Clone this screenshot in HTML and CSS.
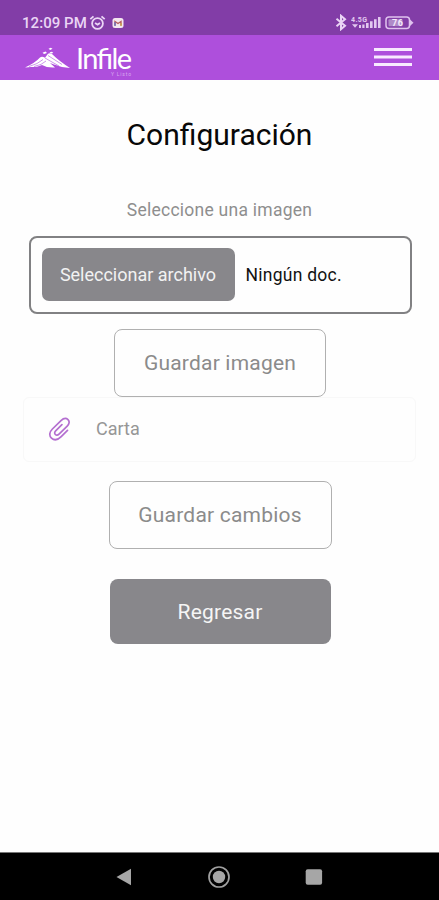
FILE: index.html
```html
<!DOCTYPE html>
<html lang="es">
<head>
<meta charset="utf-8">
<title>Configuración</title>
<link rel="stylesheet" href="styles.css">
</head>
<body>
<div class="status">
  <span class="clock">12:09 PM</span>
  <svg class="alarm" width="17" height="16" viewBox="0 0 17 16" fill="none" stroke="#ead5f5" stroke-width="1.8"><circle cx="8.5" cy="8.5" r="5.4"/><path d="M1.3 4.2 4.5 1.3M12.5 1.3l3.2 2.9M6 8l2.6 1.6L11 8"/></svg>
  <svg class="mail" width="12" height="12" viewBox="0 0 12 12"><rect x=".5" y="1" width="11" height="10" rx="2.5" fill="#f3e6ef"/><path d="M3 8.500V4.500l3 2 3-2v4" fill="none" stroke="#b8605e" stroke-width="1.4"/><path d="M3 5v4" stroke="#6a6fbd" stroke-width="1.4"/><path d="M9 6v3" stroke="#c9a24c" stroke-width="1.4"/></svg>
  <div class="signals">
    <svg width="12" height="17" viewBox="0 0 12 17" fill="none" stroke="#ead5f5" stroke-width="2"><path d="M1.5 4.800 10 11.800 6 15.200V1.800L10 5.200 1.500 12.200"/></svg>
    <svg class="bars" width="30" height="16" viewBox="0 0 30 16" fill="#e3c9f0"><text class="net" x="0" y="6.5" textLength="16">4.5G</text><path d="M1 9.200h6L4 12.700zM8 10h2v3H8zM11.300 9.500h2.200V13h-2.200zM15 8h2.600v5H15zM19 6.300h2.600V13H19zM23 4.300h2.600V13H23zM27 2h2.600v11H27z"/></svg>
    <svg width="29" height="14" viewBox="0 0 29 14"><rect x="1" y="1" width="23.500" height="11.500" rx="3" fill="none" stroke="#dfc2ee" stroke-width="1.500"/><path d="M25 3.500 28.500 6.800 25 10z" fill="#dfc2ee"/><rect x="3.500" y="3.300" width="14" height="7" rx="1" fill="#b08ac8"/><text class="level" x="7" y="10.200" textLength="11">76</text></svg>
  </div>
</div>
<header class="bar">
  <svg class="logo" width="112" height="36" viewBox="0 0 112 36" fill="#fff">
    <path d="M0 24.500Q10 20 15 14.500q2-1.500 5 .3l3-4q2-1.300 4 .2 7 7 18 14-9-.5-16-3.500l-4-1.500 5 4.500q-8 .5-13-2.500l-5 1.800-3 .3q-4-.5-9 .4z"/>
    <path d="m17.500 9.800 3-1.200 1.500 1.400-3 1zM23.500 5.800l2.300-1.100 1.700 1.100-2.300 1.200zM24.500 9.300l2.500-.6 1.300 1.200-2.300.5z"/>
    <path d="M4 23.500q9-2.500 14-7M9 23.500q8-1.500 12-5.500M20 15l14 8M23 12.500l14 9" fill="none" stroke="#b867e2" stroke-width=".7"/>
    <text class="brand" x="51" y="25.500" textLength="56" lengthAdjust="spacing">Infile</text>
    <text class="tag" x="86" y="33" textLength="20">Y Listo</text>
  </svg>
  <svg class="menu" width="38" height="21" viewBox="0 0 38 21"><path d="M0 2.500h38M0 10h38M0 17.500h38" stroke="#f8eaff" stroke-width="3"/></svg>
</header>
<main>
  <h1>Configuración</h1>
  <p class="hint">Seleccione una imagen</p>
  <div class="file"><button class="choose">Seleccionar archivo</button><span class="none">Ningún doc.</span></div>
  <button class="outline save-image">Guardar imagen</button>
  <div class="item">
    <svg width="26" height="26" viewBox="0 0 26 26" fill="none" stroke="#b46fd0" stroke-width="1.700" stroke-linecap="round"><path d="m21.500 14.300-6.300 6.300c-3.200 3.200-7 4-9.700 1.500s-2-6.200.9-9.100l8.600-8.400c2.400-2.300 5.200-2.700 7-1s1.400 4.300-.8 6.500l-7.900 7.800c-1.400 1.400-3 1.600-4 .6s-.8-2.500.6-3.900l6-5.900"/></svg>
    <span>Carta</span>
  </div>
  <button class="outline save-changes">Guardar cambios</button>
  <button class="back">Regresar</button>
</main>
<nav>
  <svg width="16" height="18" viewBox="0 0 16 18"><path d="M15 .8v16.400L.5 9z" fill="#a6a6a6"/></svg>
  <svg width="24" height="24" viewBox="0 0 24 24"><circle cx="12" cy="12" r="10" fill="none" stroke="#a0a0a0" stroke-width="1.700"/><circle cx="12" cy="12" r="6.200" fill="#a6a6a6"/></svg>
  <svg width="18" height="18" viewBox="0 0 18 18"><rect x=".7" y="1.200" width="16.400" height="15.600" rx="2" fill="#a6a6a6"/></svg>
</nav>
</body>
</html>
```
FILE: styles.css
```css
* { box-sizing: border-box; }
body { margin: 0; height: 900px; display: flex; flex-direction: column; background: #fefefe; font-family: Roboto, "Liberation Sans", sans-serif; overflow: hidden; }
button { font-family: inherit; margin: 0; padding: 0; white-space: nowrap; }
svg { display: block; flex: none; }
.status { height: 35px; flex: none; background: #823da7; display: flex; align-items: center; padding: 10px 25px 0 22px; color: #ead5f5; }
.clock { font-size: 15px; font-weight: 500; letter-spacing: .05px; width: 67px; white-space: nowrap; }
.mail { margin-left: 6px; }
.signals { margin-left: auto; display: flex; align-items: center; gap: 4px; }
.net { font-size: 7px; font-weight: 700; }
.level { font-size: 9px; font-weight: 700; fill: #f5e8fb; }
.bar { height: 45px; flex: none; background: #ae4fdc; display: flex; align-items: flex-start; justify-content: space-between; padding: 8px 27px 0 25px; }
.menu { margin-top: 4px; }
.logo { overflow: visible; }
.brand { font-family: Lato, sans-serif; font-size: 29px; font-weight: 400; }
.tag { font-size: 5px; fill: #d8a9ef; }
main { flex: 1; display: flex; flex-direction: column; align-items: center; }
h1 { margin: 37px 0 0; font-size: 30px; line-height: 36px; font-weight: 400; color: #080808; }
.hint { margin: 46px 0 0; font-size: 17.5px; line-height: 22px; color: #8e8e8e; letter-spacing: .25px; }
.file { margin: 15px 0 0 1px; width: 383px; height: 78px; border: 2px solid #818183; border-radius: 8px; display: flex; align-items: center; padding: 0 0 1px 11px; }
.choose { width: 193px; height: 53px; border: 0; border-radius: 7px; background: #88878b; color: #f2f2f2; font-size: 18px; }
.none { margin-left: 11px; font-size: 17.5px; color: #111; letter-spacing: .25px; }
.outline { background: #fefefe; border: 1.500px solid #b0b0b0; border-radius: 8px; color: #8b8b8b; font-size: 21px; letter-spacing: .2px; }
.save-image { margin: 15px 0 0 1px; width: 212px; height: 68px; }
.item { width: 393px; height: 65px; border: 1px solid #f8f8f8; border-radius: 6px; display: flex; align-items: center; padding: 0 0 2px 22px; gap: 24px; color: #969696; font-size: 18px; }
.save-changes { margin: 19px 0 0 1px; width: 223px; height: 68px; }
.back { margin: 30px 0 0 1px; width: 221px; height: 65px; border: 0; border-radius: 8px; background: #88878b; color: #f5f5f5; font-size: 21px; letter-spacing: .2px; }
nav { height: 48px; flex: none; background: #000; border-top: 1px solid #777; display: flex; align-items: center; justify-content: space-between; padding: 0 116px; }
```
